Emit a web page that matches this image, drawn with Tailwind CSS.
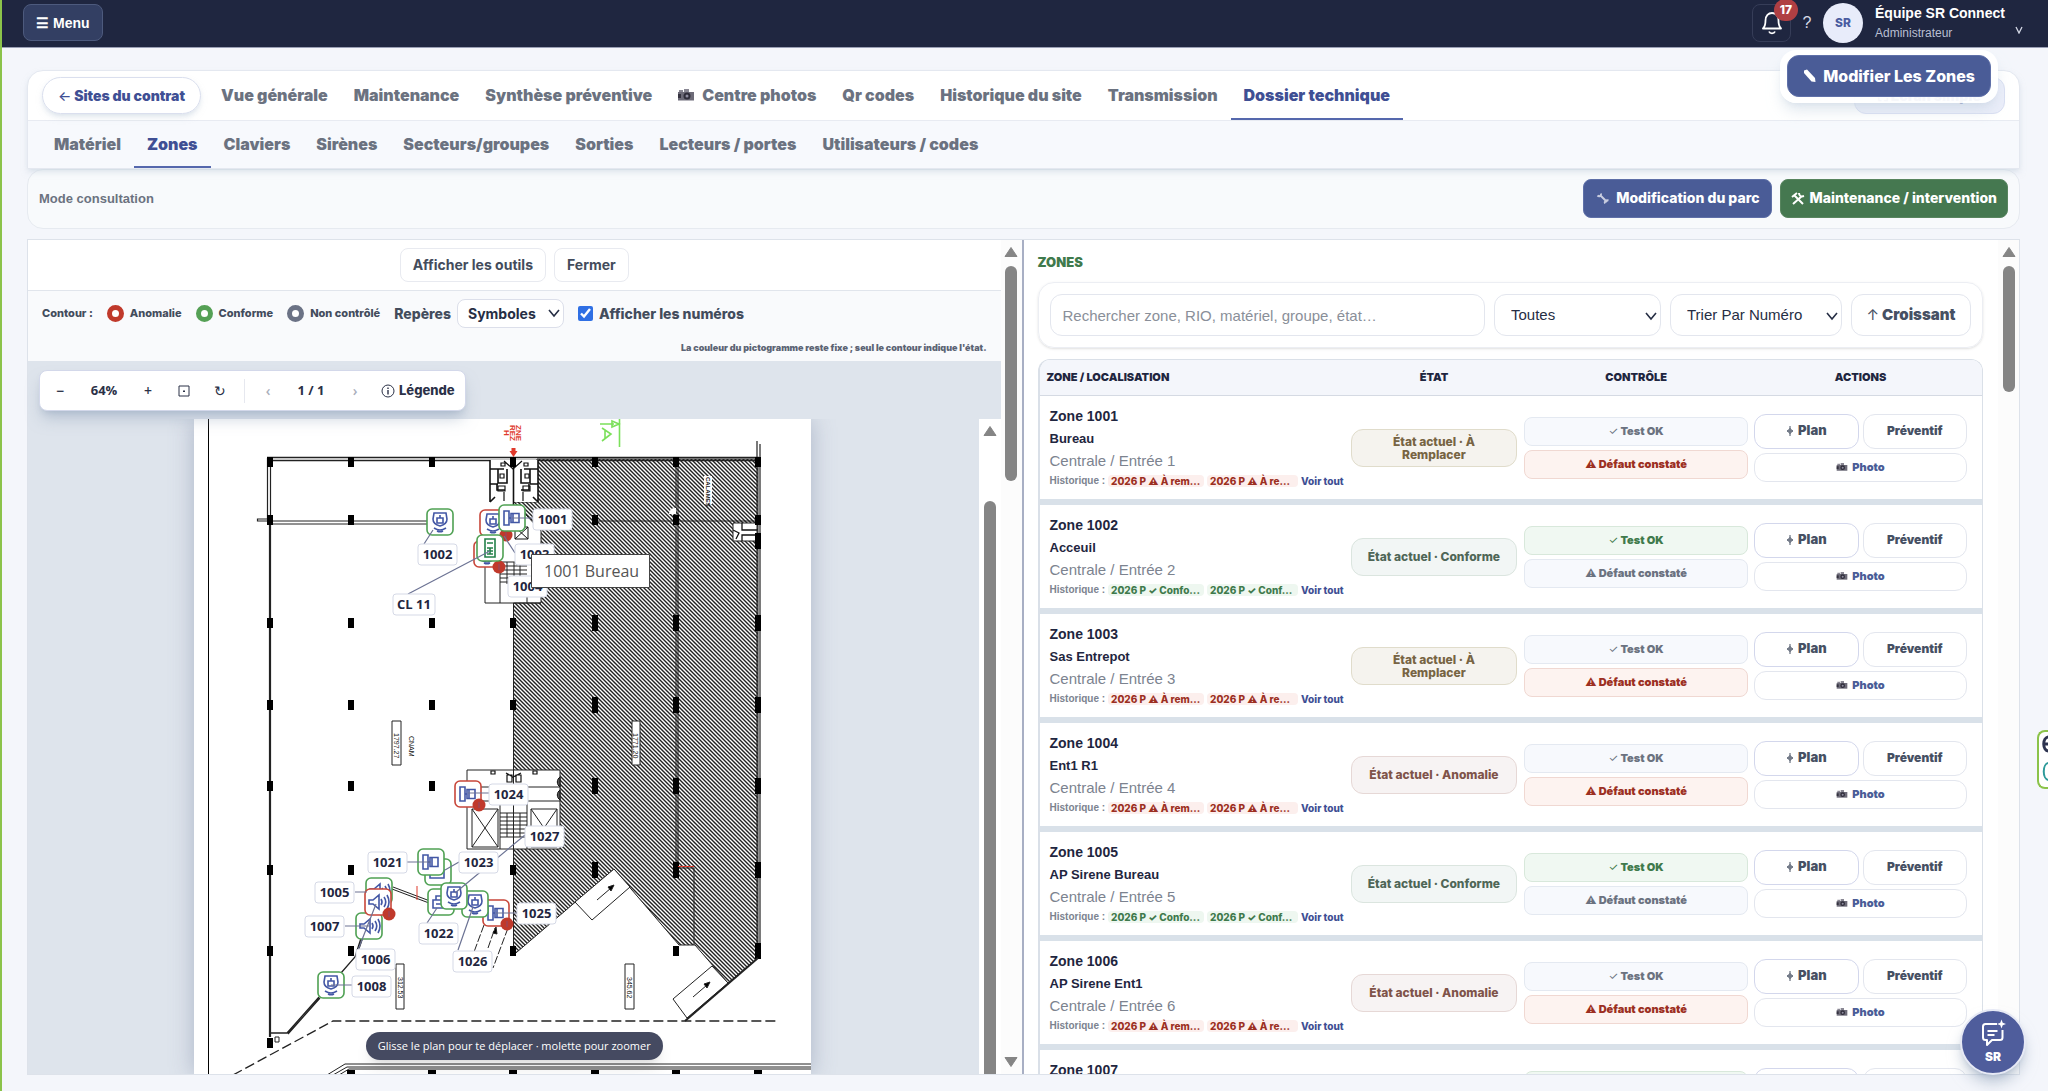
<!DOCTYPE html>
<html lang="fr" class="h-full">
<head>
    <meta charset="UTF-8" />
    <meta name="viewport" content="width=device-width, initial-scale=1.0" />
    <title>SR Connect · Dossier technique</title>
    <script src="https://cdn.jsdelivr.net/npm/@tailwindcss/browser@4"></script>
</head>
<body class="relative h-screen overflow-hidden flex flex-col border-l-2 border-[#8bc34a] bg-[#f4f6fb] font-['Liberation_Sans',Arial,sans-serif] text-[#1f2640]">

    <!-- Icônes partagées -->
    <svg class="hidden">
        <symbol id="i-camera" viewBox="0 0 16 12">
            <path d="M0 3h16v8.500H0z" fill="#6d6b78" /><path d="M1 1h4v2H1zM6 0h5v3H6z" fill="#8a8894" />
            <circle cx="9" cy="7" r="3.500" fill="#2f2d3a" /><circle cx="9" cy="7" r="1.500" fill="#8f8da0" /><path d="M0 5h3v4H0z" fill="#34323f" />
        </symbol>
        <symbol id="i-target" viewBox="0 0 8 10"><path d="M4 0v10M1 5h6M4 2.500L6.500 5 4 7.500 1.500 5z" fill="none" stroke="currentColor" stroke-width="1" /></symbol>
        <symbol id="i-chevron" viewBox="0 0 12 12"><path d="M1 3l5 6 5-6" fill="none" stroke="currentColor" stroke-width="1.600" /></symbol>
        <symbol id="i-up" viewBox="0 0 14 12"><path d="M7 1.500l6 9H1z" fill="#858585" stroke="#858585" stroke-linejoin="round" /></symbol>
        <symbol id="i-down" viewBox="0 0 14 12"><path d="M7 10.500l6-9H1z" fill="#858585" stroke="#858585" stroke-linejoin="round" /></symbol>
    </svg>

    <!-- BARRE SUPERIEURE -->
    <header class="h-12 shrink-0 flex items-center justify-between pb-0.5 pl-[21px] pr-[25px] bg-[#1f2640] border-b border-[#9a9fb5] text-white">
        <button class="h-[37px] px-3 flex items-center gap-1 rounded-lg border border-[#4d5a7d] bg-[#333f63] text-sm font-bold"><span>☰</span>Menu</button>
        <div class="flex items-center">
            <button class="relative w-[39px] h-[38px] flex items-center justify-center rounded-lg border border-[#363d58]" aria-label="Notifications">
                <svg class="w-6 h-6" viewBox="0 0 24 24" fill="none" stroke="#fff" stroke-width="1.800" stroke-linejoin="round"><path d="M3 17.500h18c-2-2-2.500-4-2.500-8C18.500 4.500 15.500 2 12 2S5.500 4.500 5.500 9.500c0 4-.5 6-2.500 8z" /><path d="M9 20.500c1 2.500 5 2.500 6 0" /></svg>
                <span class="absolute -top-1.5 -right-2 w-6 h-[22px] flex items-center justify-center rounded-full bg-[#b03f43] font-[Inter] text-xs font-extrabold">17</span>
            </button>
            <button class="w-8 text-base text-[#d5d9e6]">?</button>
            <span class="w-10 h-10 mr-3 flex items-center justify-center rounded-full bg-[#e8ecfa] font-[Inter] text-xs font-extrabold text-[#4a5ca0]">SR</span>
            <div class="w-[140px] flex flex-col gap-1">
                <span class="text-sm leading-4 font-bold whitespace-nowrap">Équipe SR Connect</span>
                <span class="text-xs leading-4 text-[#b9bfd2]">Administrateur</span>
            </div>
            <svg class="w-2 h-2 mt-3.5" viewBox="0 0 8 8"><path d="M1 1l3 6 3-6" fill="none" stroke="#d5d9e6" stroke-width="1.300" /></svg>
        </div>
    </header>

    <main class="flex-1 min-h-0 flex flex-col pt-[22px] pb-4 pl-[25px] pr-7">
        <!-- ONGLETS -->
        <section class="relative z-10 shrink-0 rounded-t-2xl border border-[#e4e8f0] bg-white shadow-md shadow-slate-300/50 font-[Inter] font-black text-[#6b7280]">
            <div class="h-[50px] flex items-center border-b border-[#e8ebf2] px-[14px]">
                <button class="h-[37px] px-[15px] mr-[7px] rounded-full border border-[#dadfee] shadow-md shadow-slate-300/50 text-sm text-[#3f4f94] whitespace-nowrap"><span class="font-medium">←</span> Sites du contrat</button>
                <nav id="tabs" class="h-full flex flex-1"></nav>
                <button class="w-[151px] h-[37px] rounded-xl border border-[#d9dff2] bg-[#ebeefa] text-sm text-[#4a5c97]">⛶ Écran simple</button>
            </div>
            <nav id="subtabs" class="h-[47px] flex bg-[#f7f9fd] pl-[13px]"></nav>
        </section>

        <!-- MODE -->
        <section class="h-[60px] shrink-0 flex items-center justify-between rounded-2xl border border-[#e6eaf0] bg-[#f8fafc] px-[11px]">
            <span class="text-[13px] font-bold text-[#6b7280]">Mode consultation</span>
            <div class="flex gap-2 pb-0.5 font-[Inter] text-sm font-extrabold text-white">
                <button class="h-[39px] px-3 flex items-center gap-1.5 rounded-lg border border-[#5f70a8] bg-[#4a5c97]">
                    <svg class="w-3.5 h-3.5" viewBox="0 0 14 14" fill="none" stroke="#c9cde0" stroke-width="2"><path d="M4 4l7 7M1.500 4.500C3 6 5.500 5 5 2.500M9 12.500c-1-2 1-4 3.500-3" /></svg>Modification du parc
                </button>
                <button class="h-[39px] px-2.5 flex items-center gap-1 rounded-lg border border-[#58855f] bg-[#457850]">
                    <svg class="w-3.5 h-3.5" viewBox="0 0 14 14" fill="none" stroke="#fff" stroke-width="2"><path d="M3 4l9 9M11 5l-9 8M1 6l5-4M8 2c0 3 2 4 5 3" /></svg>Maintenance / intervention
                </button>
            </div>
        </section>

        <section class="flex-1 min-h-0 mt-[10px] flex border border-[#dde2ea] bg-white">
            <!-- PLAN -->
            <div class="w-1/2 shrink-0 flex border-r-2 border-[#a8afc4]">
                <div class="flex-1 min-w-0 flex flex-col">
                    <div class="h-[51px] shrink-0 flex items-center justify-center gap-2 border-b border-[#e1e5ec] font-[Inter] text-sm font-bold text-[#434c5c]">
                        <button class="h-[34px] px-3 rounded-lg border border-[#e8eaf0]">Afficher les outils</button>
                        <button class="h-[34px] px-3 rounded-lg border border-[#e8eaf0]">Fermer</button>
                    </div>
                    <div class="h-[70px] shrink-0 flex flex-col gap-3.5 pt-2 px-[14px] bg-[#f9fafc] font-[Inter] font-bold text-[#434c5c]">
                        <div class="h-[29px] flex items-center whitespace-nowrap text-[11px] font-extrabold">
                            <span class="mr-3.5">Contour :</span>
                            <span class="w-[17px] h-[17px] mr-1.5 rounded-full border-[5px] border-[#c0392b] bg-white"></span><span class="mr-3.5">Anomalie</span>
                            <span class="w-[17px] h-[17px] mr-1.5 rounded-full border-[5px] border-[#55a055] bg-white"></span><span class="mr-3.5">Conforme</span>
                            <span class="w-[17px] h-[17px] mr-1.5 rounded-full border-[5px] border-[#6b7285] bg-white"></span><span class="mr-3.5">Non contrôlé</span>
                            <label for="markers" class="mr-1.5 text-sm">Repères</label>
                            <span class="relative mr-3.5 text-sm text-[#262e44]">
                                <select id="markers" class="w-[107px] h-[29px] pl-2.5 appearance-none rounded-lg border border-[#dcdfea] bg-white font-bold"><option>Symboles</option></select>
                                <svg class="absolute right-1 top-2 w-3 h-3"><use href="#i-chevron" /></svg>
                            </span>
                            <input id="numbers" type="checkbox" checked class="w-[15px] h-[15px] mr-1.5 accent-[#2f6fe4]" />
                            <label for="numbers" class="text-sm">Afficher les numéros</label>
                        </div>
                        <p class="text-right text-[9px] leading-3 font-black text-[#5c6474]">La couleur du pictogramme reste fixe ; seul le contour indique l'état.</p>
                    </div>
                    <div class="flex-1 min-h-0 flex flex-col bg-[#dee4ec]">
                        <div class="relative z-10 self-start shrink-0 h-[41px] mt-[9px] mb-2 ml-[11px] pl-0.5 pr-2.5 flex items-center rounded-lg border border-[#d3d8ea] bg-white shadow-lg shadow-slate-400/50 font-['Open_Sans'] text-sm font-semibold text-[#2b3147]">
                            <button class="w-9" aria-label="Dézoomer">−</button>
                            <span class="w-[52px] text-center text-[13px] font-bold">64%</span>
                            <button class="w-9" aria-label="Zoomer">+</button>
                            <button class="w-9 flex justify-center" aria-label="Ajuster"><svg class="w-3 h-3" viewBox="0 0 12 12"><path d="M1 1h10v10H1z" fill="none" stroke="#2b3147" /><path d="M5 5.500h2v1.500H5z" fill="#2b3147" /></svg></button>
                            <button class="w-9 font-normal" aria-label="Pivoter">↻</button>
                            <span class="w-px h-6 mx-1.5 bg-[#e6e8ef]"></span>
                            <button class="w-[34px] text-[#a9aebb]" aria-label="Page précédente">‹</button>
                            <span class="w-[52px] text-center text-[13px] font-bold">1 / 1</span>
                            <button class="w-9 text-[#a9aebb]" aria-label="Page suivante">›</button>
                            <button class="ml-2 flex items-center gap-1 font-[Inter] text-[13px] font-extrabold">
                                <svg class="w-3.5 h-3.5" viewBox="0 0 14 14" fill="none" stroke="#2b3147"><circle cx="7" cy="7" r="6" /><path d="M7 6v4.500M7 3.500V5" stroke-width="1.400" /></svg>Légende
                            </button>
                        </div>
                        <div class="relative flex-1 min-h-0 flex overflow-hidden">
                            <div class="flex-1 flex justify-center pr-0.5">
                                <svg id="plan" class="shrink-0 w-[617px] h-[656px] bg-white shadow-[0_0_22px_rgba(110,125,155,0.45)]" viewBox="194 419 617 656">
                                    <defs>
                                        <pattern id="hatch" width="4" height="4" patternUnits="userSpaceOnUse"><path d="M0 0h4v4H0z" fill="#fff" /><path d="M-1 -1l6 6M-1 3l2 2M3 -1l2 2" stroke="#222" stroke-width="1.400" /></pattern>
                                        <g id="m-det" fill="none" stroke="#4357a5" stroke-width="1.600"><path d="M-6 -9h12l1 6c0 4-3 6-7 7-4-1-7-3-7-7z" /><path d="M-3 -4h6v5h-6zM0 -7v3M-6 6q6 4 12 0M-3 9q3 1.500 6 0" /></g>
                                        <g id="m-con" fill="none" stroke="#4357a5" stroke-width="1.600"><path d="M-8 -7h5v14h-5zM-1 -4.500h8v9h-8zM1 -4.500v9M-3 0h2" /></g>
                                        <g id="m-sir" fill="none" stroke="#4357a5" stroke-width="1.600"><path d="M-9 -2h4l6 -5v14l-6 -5h-4zM3 -3q2 3 0 6M6 -5q3.500 5 0 10M9 -7q4 7 0 14" /></g>
                                        <g id="m-key" fill="none" stroke="#23814a" stroke-width="1.600"><path d="M-5 -9h10v18h-10zM-3 -5h6M-3 0h6M-3 3h6M-3 6h6M0 0v6" /></g>
                                        <g id="m-lock" fill="none" stroke="#4357a5" stroke-width="1.600"><path d="M-8 -2h14v8h-14zM-5 -2v-4h8v4M-5 2h9" /></g>
                                        <g id="col-s"><path d="M-3 -5h6v10h-6z" /></g>
                                        <g id="col-l"><path d="M-3 -8h6v16h-6z" /></g>
                                    </defs>
                                    <path d="M208.500 419v656" stroke="#000" />
                                    <!-- Zone hachurée -->
                                    <path d="M537 459h221v499l-30 25-33-38h-16l-65-76-100.500 86V603H541v-72l-27-29h23z" fill="url(#hatch)" stroke="#222" />
                                    <path d="M467 770h93v79h-93zM704 476h8v28h-8z" fill="#fff" />
                                    <!-- Murs -->
                                    <g fill="none" stroke="#222" stroke-width="1">
                                        <path d="M267 457.500h492M267 460.500h492" stroke-width="1.500" />
                                        <path d="M267.500 458v61h-10v2h12v516M270.500 460v577M757 441v517M760 444v514" stroke-width="1.200" />
                                        <path d="M271 521h156M271 524h156M676 460v410M678 460v408M694 868v77M676 868h18M595 521h162" />
                                        <path d="M271 1033h16l32-36M288 1034l32-36M341 973l14-16 7-22M356 957l7-20" stroke-width="1.300" />
                                        <path d="M393 887l37 14M392 889l37 14" />
                                        <path d="M513.500 603v352M467 770h93v79h-93zM485 558v45h56M500 558v45M527 585v18M467 787h93M467 801h93M500 801v48M527 801v48" />
                                        <path d="M472 809h26v38h-26zM472 809l26 38M498 809l-26 38M531 809h26v38h-26zM531 809l26 38M557 809l-26 38" />
                                        <path d="M500 813h27M500 817h27M500 821h27M500 825h27M500 829h27M500 833h27M500 837h27M507 813v24M513.500 811v26M520 813v24" />
                                        <path d="M500 562h27M500 566h27M500 570h27M500 574h27M500 578h14M500 582h14M507 562v22M514 562v16M520 562v14" />
                                        <path d="M275 1037h4v5h-4z" />
                                        <path d="M233 1075l100-54h443" stroke-dasharray="10 4" stroke-width="1.300" />
                                        <path d="M327 1075l18-11h466M333 1075l14-8h464M339 1075l10-6h462" />
                                        <path d="M484 925l-10 27M508 928l-15 40M488 948l7-20" stroke-dasharray="8 2" />
                                    </g>
                                    <!-- Sanitaires -->
                                    <path d="M490 460h48v42h-48z" fill="#fff" />
                                    <g fill="none" stroke="#111" stroke-width="1.600">
                                        <path d="M490 460v42M538 460v42M513.500 460v45M490 469h14M524 469h14M498 469v14h9v-14M521 469v14h9v-14M490 502l5-5M538 502l-5-5M497 484v6h8M529 484v6h-8M490 484h8M530 484h8" />
                                        <path d="M504 461l9 8 9-8M501 463h4v3h-4zM524 463h4v3h-4zM500 474h4v4h-4zM525 474h4v4h-4zM498 486h7v5h-7zM523 486h7v5h-7zM504 492v9M523 492v9" stroke-width="1.200" />
                                        <path d="M506 773l7 4 8-4M507 775h5v7h-5zM516 775h5v7h-5zM491 771h4v3h-4zM533 771h4v3h-4z" stroke-width="1.200" />
                                        <path d="M515 527h13v12h-13zM515 527l13 12M528 527l-13 12" stroke-width="1" />
                                    </g>
                                    <path d="M733 523h24v18h-24z" fill="#fff" stroke="#222" /><path d="M742 523v7h15M742 541v-6h15M733 530l6 3-3 6" fill="none" stroke="#111" stroke-width="1.300" />
                                    <path d="M669 514a6 6 0 0 1 7-6v6z" fill="#fff" />
                                    <path d="M560 777a6 6 0 0 0 0 10zM560 790a6 6 0 0 0 0 10z" fill="#555" stroke="#111" />
                                    <g id="columns" fill="#000"></g>
                                    <!-- Rampes -->
                                    <g fill="#fff" stroke="#222">
                                        <path d="M575 902l39-33 16 18-38 33z" /><path d="M673 999l39-33 16 17-41 35z" /><path d="M685 1021l73-63" stroke-width="2" />
                                        <path d="M597 900l14-12M693 997l14-12" /><path d="M614 885l-6 2 3 4zM710 982l-6 2 3 4zM496 927l-3 6 4 1z" fill="#000" />
                                    </g>
                                    <g fill="#fff" stroke="#222"><path d="M392 721h9v44h-9zM632 721h8v44h-8zM396 964h8v45h-8zM625 964h9v45h-9z" /></g>
                                    <g fill="#111" font-family="Liberation Sans" font-size="7">
                                        <text transform="translate(394 733) rotate(90)">1797.27</text><text transform="translate(409 736) rotate(90)">CNAM</text>
                                        <text transform="translate(633 733) rotate(90)">1771.20</text><text transform="translate(706 477) rotate(90)" font-weight="700" font-size="6">CALAMES</text>
                                        <text transform="translate(398 977) rotate(90)">312.53</text><text transform="translate(627 977) rotate(90)">345.62</text>
                                    </g>
                                    <g fill="#e0392b" font-family="Liberation Sans" font-weight="700" font-size="8">
                                        <text transform="translate(516 425) rotate(90)">ZNE</text><text transform="translate(510 425) rotate(90)">REZ</text><text transform="translate(504 430) rotate(90)">H</text>
                                        <path d="M513.500 457l-4-6h2v-3h4v3h2z" /><path d="M416 886h2v14h-2z" opacity=".5" /><path d="M678 866h16v1h-16z" />
                                    </g>
                                    <path d="M619.500 419v28M600 424h14M612 421l7 3-7 3zM602 428l9 6-9 7M605 430v9" fill="none" stroke="#7be05a" stroke-width="1.600" />
                                    <g id="pins"></g>
                                    <!-- Infobulle -->
                                    <path d="M531.500 554.500h118v33h-118z" fill="#fff" stroke="#444" />
                                    <text x="544" y="577" font-family="Open Sans" font-size="16" fill="#555">1001 Bureau</text>
                                </svg>
                            </div>
                            <div class="w-[22px] flex flex-col items-center pt-1.5 bg-white">
                                <svg class="w-3.5 h-3"><use href="#i-up" /></svg>
                                <span class="flex-1 w-3 mt-16 rounded-t-full bg-[#858585]"></span>
                            </div>
                            <div class="absolute inset-x-0 bottom-3.5 flex justify-center"><span class="px-3 py-1.5 rounded-full bg-[#454a61] shadow-lg font-['Open_Sans'] text-[11px] leading-4 font-medium text-white">Glisse le plan pour te déplacer · molette pour zoomer</span></div>
                        </div>
                    </div>
                </div>
                <div class="w-[21px] shrink-0 flex flex-col items-center pt-1.5 pb-1.5 bg-[#fcfcfc]">
                    <svg class="w-3.5 h-3"><use href="#i-up" /></svg>
                    <span class="w-3 h-[215px] mt-2 mb-auto rounded-full bg-[#858585]"></span>
                    <svg class="w-3.5 h-3"><use href="#i-down" /></svg>
                </div>
            </div>

            <!-- ZONES -->
            <div class="flex-1 min-w-0 flex">
                <div class="flex-1 min-w-0 h-full overflow-hidden pt-[14px] pl-[14px] pr-[15px]">
                    <h2 class="font-[Inter] text-[13px] leading-4 font-black text-[#3f7a4c]">ZONES</h2>
                    <div class="h-[66px] mt-3 px-[11px] flex items-center gap-[9px] rounded-2xl border border-[#eceef3] shadow-sm text-[15px] text-[#262e44]">
                        <input type="text" aria-label="Rechercher" placeholder="Rechercher zone, RIO, matériel, groupe, état…" class="flex-1 min-w-0 h-[42px] px-3 rounded-xl border border-[#e3e6ee] placeholder:text-[#8a8f99]" />
                        <span class="relative">
                            <select aria-label="Filtrer" class="w-[167px] h-[42px] pl-4 appearance-none rounded-xl border border-[#e3e6ee]"><option>Toutes</option></select>
                            <svg class="absolute right-1 top-4 w-3 h-3"><use href="#i-chevron" /></svg>
                        </span>
                        <span class="relative">
                            <select aria-label="Trier" class="w-[172px] h-[42px] pl-4 appearance-none rounded-xl border border-[#e3e6ee]"><option>Trier Par Numéro</option></select>
                            <svg class="absolute right-1 top-4 w-3 h-3"><use href="#i-chevron" /></svg>
                        </span>
                        <button class="w-[120px] h-[42px] rounded-xl border border-[#e3e6ee] font-[Inter] font-black text-[#465063]"><span class="font-normal">↑</span> Croissant</button>
                    </div>
                    <div class="mt-[11px] rounded-t-xl border border-l-2 border-b-0 border-[#dae0e8] overflow-hidden">
                        <table class="w-full table-fixed border-separate border-spacing-0">
                            <colgroup><col class="w-[32.6%]" /><col class="w-[18.5%]" /><col class="w-[24.4%]" /><col /></colgroup>
                            <thead>
                                <tr class="h-9 bg-[#f4f6fb] font-[Inter] text-[11px] text-[#1f2640]">
                                    <th class="pl-[7px] text-left font-black border-b border-[#d5dae3]">ZONE / LOCALISATION</th>
                                    <th class="font-black border-b border-[#d5dae3]">ÉTAT</th>
                                    <th class="font-black border-b border-[#d5dae3]">CONTRÔLE</th>
                                    <th class="pr-3 font-black border-b border-[#d5dae3]">ACTIONS</th>
                                </tr>
                            </thead>
                            <tbody id="rows"></tbody>
                        </table>
                    </div>
                </div>
                <div class="w-[21px] shrink-0 flex flex-col items-center pt-1.5 bg-[#fcfcfc]">
                    <svg class="w-3.5 h-3"><use href="#i-up" /></svg>
                    <span class="w-3 h-[126px] mt-2 rounded-full bg-[#858585]"></span>
                </div>
            </div>
        </section>
    </main>

    <!-- Bouton flottant -->
    <div class="absolute z-20 top-[50px] right-[50px] p-[7px] pt-[5px] pb-[6px] rounded-2xl bg-white/95 shadow-lg shadow-slate-300/60">
        <button class="h-[42px] px-[15px] flex items-center gap-1.5 rounded-xl border border-[#5f70a8] bg-[#4a5c97] font-[Inter] text-base font-extrabold text-white whitespace-nowrap">
            <svg class="w-3.5 h-3.5" viewBox="0 0 14 14" fill="#fff"><path d="M1 1.500l3-1 8 8.500.5 4-4-.5L1 4z" /></svg>Modifier Les Zones
        </button>
    </div>

    <!-- Assistant -->
    <button class="absolute z-20 right-[22px] bottom-4 w-[66px] h-[66px] flex flex-col items-center justify-center gap-0.5 rounded-full border-2 border-[#e6e9f5] bg-[#4f5d9c] shadow-lg shadow-slate-400/60 font-[Inter] text-xs font-black text-white">
        <svg class="w-7 h-7" viewBox="0 0 28 28" fill="none" stroke="#fff" stroke-width="2" stroke-linejoin="round"><path d="M18 5H6.500C5 5 4 6 4 7.500v11C4 20 5 21 6.500 21H8v5l5-5h8c1.500 0 2.500-1 2.500-2.500V11M8.500 12h10M8.500 16h7" /><path d="M22.500 0.500l1.200 3.300 3.300 1.200-3.300 1.200-1.200 3.300-1.200-3.300-3.300-1.200 3.300-1.200z" fill="#fff" stroke="none" /></svg>SR
    </button>
    <div class="absolute z-20 right-0 top-[730px] w-[11px] h-[59px] overflow-hidden rounded-l-lg border-2 border-r-0 border-[#8bc34a] bg-white">
        <svg class="w-[9px] h-[55px]" viewBox="0 0 9 55" fill="none"><path d="M10 5C3 5 3 19 10 19M4 12h5" stroke="#2d3350" stroke-width="3" /><path d="M10 31C3 31 3 48 10 48" stroke="#2d9a9a" stroke-width="2" /></svg>
    </div>

    <script>
        const camera = '<svg class="w-4 h-3"><use href="#i-camera" /></svg>';

        const tab = (t, active, icon) => `<a href="#" class="flex items-center gap-2 px-[13px] text-base whitespace-nowrap border-b-2 ${active ? 'border-[#5568ad] text-[#3f4f94]' : 'border-transparent'}">${icon ? camera : ''}${t}</a>`;
        document.getElementById('tabs').innerHTML = ['Vue générale', 'Maintenance', 'Synthèse préventive', 'Centre photos', 'Qr codes', 'Historique du site', 'Transmission', 'Dossier technique']
            .map(t => tab(t, t === 'Dossier technique', t === 'Centre photos')).join('');
        document.getElementById('subtabs').innerHTML = ['Matériel', 'Zones', 'Claviers', 'Sirènes', 'Secteurs/groupes', 'Sorties', 'Lecteurs / portes', 'Utilisateurs / codes']
            .map(t => tab(t, t === 'Zones')).join('');

        // Lignes du tableau
        const etats = {
            r: ['État actuel · À Remplacer', 'border-[#e0dccb] bg-[#f5f3ee] text-[#776443]'],
            c: ['État actuel · Conforme', 'border-[#dbe5df] bg-[#f2f6f5] text-[#4f6657]'],
            a: ['État actuel · Anomalie', 'border-[#e6d8d6] bg-[#f7f3f3] text-[#7f5349]']
        };
        const zones = [[1001, 'Bureau', 'r'], [1002, 'Acceuil', 'c'], [1003, 'Sas Entrepot', 'r'], [1004, 'Ent1 R1', 'a'], [1005, 'AP Sirene Bureau', 'c'], [1006, 'AP Sirene Ent1', 'a'], [1007, 'AP Sirene R1', 'c']];
        const neutral = 'border-[#e4e9f1] bg-[#f7f9fd] text-[#6b7280]';
        document.getElementById('rows').innerHTML = zones.map(([n, name, e], i) => {
            const ok = e === 'c';
            const chip = ok ? 'bg-[#eef7f0] text-[#3f7a4c]' : 'bg-[#fcefed] text-[#9c2f22]';
            const td = 'border-b-[6px] border-[#d9e1e9]';
            return `<tr class="h-[109px]">
                <td class="${td} pl-[10px] align-top pt-3">
                    <div class="text-sm leading-4 font-bold">Zone ${n}</div>
                    <div class="mt-[7px] text-[13px] leading-4 font-bold">${name}</div>
                    <div class="mt-1 text-[15px] leading-5 text-[#7c838f]">Centrale / Entrée ${i + 1}</div>
                    <div class="mt-1 flex items-center gap-[3px] whitespace-nowrap text-[10px] leading-3 font-[Inter] font-extrabold">
                        <span class="font-['Liberation_Sans'] font-bold text-[#7c838f]">Historique :</span>
                        <span class="w-24 px-[3px] rounded ${chip}">2026 P ${ok ? '✓ Confo...' : '⚠ À rem...'}</span>
                        <span class="w-[91px] px-[3px] rounded ${chip}">2026 P ${ok ? '✓ Conf...' : '⚠ À re...'}</span>
                        <a href="#" class="text-[#3f4f94]">Voir tout</a>
                    </div>
                </td>
                <td class="${td} px-[4px]"><div class="h-[38px] px-4 flex items-center justify-center rounded-xl border text-center font-[Inter] text-xs leading-[13px] font-extrabold ${etats[e][1]}"><span class="${e === 'r' ? '' : 'whitespace-nowrap'}">${etats[e][0]}</span></div></td>
                <td class="${td} px-[3px]"><div class="flex flex-col gap-1 font-[Inter] text-[11px] font-black">
                    <button class="h-[29px] rounded-lg border ${ok ? 'border-[#d8e8db] bg-[#f0f8f2] text-[#3f7a4c]' : neutral}"><span class="font-normal">✓</span> Test OK</button>
                    <button class="h-[29px] rounded-lg border ${ok ? neutral : 'border-[#f0d8d2] bg-[#fdf3f0] text-[#9c2f22]'}"><span class="font-normal">⚠</span> Défaut constaté</button>
                </div></td>
                <td class="${td} pl-[3px] pr-[15px]"><div class="grid grid-cols-2 gap-1 font-[Inter] font-black text-[#465063]">
                    <button class="h-[35px] flex items-center justify-center gap-1 rounded-xl border border-[#d3d7ec] text-[13px]"><svg class="w-2 h-2.5"><use href="#i-target" /></svg>Plan</button>
                    <button class="h-[35px] rounded-xl border border-[#e3e6ee] text-xs">Préventif</button>
                    <button class="col-span-2 h-[29px] flex items-center justify-center gap-1 rounded-xl border border-[#e3e6ee] text-[11px] text-[#4a5c97]"><svg class="w-3 h-2"><use href="#i-camera" /></svg>Photo</button>
                </div></td>
            </tr>`;
        }).join('');

        // Poteaux : s = petit, l = grand
        const cols = [[270, [462, 520, 623, 705, 786, 870, 951, 1043], 's'], [351, [462, 520, 623, 705, 786, 870, 951], 's'], [432, [462, 623, 705, 786], 's'], [513, [462, 623, 705, 870, 951], 's'], [595, [462, 520], 's'], [595, [623, 705, 786, 870], 'l'], [676, [462, 520, 951], 's'], [676, [623, 705, 786, 870], 'l'], [758, [462, 520], 's'], [758, [541, 623, 705, 786, 870, 951], 'l']];
        document.getElementById('columns').innerHTML = cols.map(([x, ys, k]) => ys.map(y => `<use href="#col-${k}" x="${x}" y="${y}" />`).join('')).join('')
            + [351, 432, 513, 595, 676, 758].map(x => `<rect x="${x - 4}" y="1070" width="8" height="5" />`).join('');

        // Repères : x, y, symbole, anomalie
        const G = '#4fa153', R = '#c8463a';
        const pins = [[440, 522, 'det', G], [493, 523, 'det', R], [487, 554, 'det', R], [512, 518, 'con', G], [490, 548, 'key', G], [468, 794, 'con', R], [438, 872, 'lock', G], [431, 862, 'con', G], [379, 891, 'sir', G], [369, 926, 'sir', G], [378, 902, 'sir', R], [331, 985, 'det', G], [441, 902, 'lock', G], [496, 913, 'con', R], [475, 904, 'det', G], [454, 896, 'det', G]];
        const dots = [[506, 535], [499, 567], [479, 805], [389, 914], [507, 924]];
        const links = 'M424 544l9-14M512 518h22M408 594l82-43M515 553l-11-17M468 793h22M525 835l-70 58M459 862l-14 8M407 862h24M355 892h12M345 926h25M358 950l18-46M427 923l10-15M458 950l15-43M496 913h22M331 985h22';
        const labels = [[533, 509, '1001'], [418, 544, '1002'], [515, 544, '1003'], [508, 576, '1004'], [393, 594, 'CL 11'], [489, 784, '1024'], [525, 826, '1027'], [368, 852, '1021'], [459, 852, '1023'], [315, 882, '1005'], [305, 916, '1007'], [356, 949, '1006'], [419, 923, '1022'], [453, 951, '1026'], [517, 903, '1025'], [352, 976, '1008']];
        document.getElementById('pins').innerHTML =
            pins.map(([x, y, s, c]) => {
                const dot = dots.find(d => c === R && Math.abs(d[0] - x - 12) < 2 && Math.abs(d[1] - y - 12) < 2);
                return `<rect x="${x - 13}" y="${y - 13}" width="26" height="26" rx="5" fill="#fff" stroke="${c}" stroke-width="1.600" /><use href="#m-${s}" x="${x}" y="${y}" />`
                    + (dot ? `<circle cx="${dot[0]}" cy="${dot[1]}" r="6.500" fill="#c0392b" /><path d="M${dot[0]} ${dot[1] - 3}v6" stroke="#8e4a6a" />` : '');
            }).join('')
            + `<path d="${links}" fill="none" stroke="#6c7394" stroke-width="1.200" />`
            + labels.map(([x, y, t]) => {
                const w = t.length > 4 ? 42 : 39;
                return `<rect x="${x}" y="${y}" width="${w}" height="21" rx="3" fill="#fff" stroke="#d5d9e6" /><text x="${x + w / 2}" y="${y + 15}" text-anchor="middle" font-family="Open Sans" font-weight="700" font-size="13" fill="#1f2640">${t}</text>`;
            }).join('');
    </script>
</body>
</html>
